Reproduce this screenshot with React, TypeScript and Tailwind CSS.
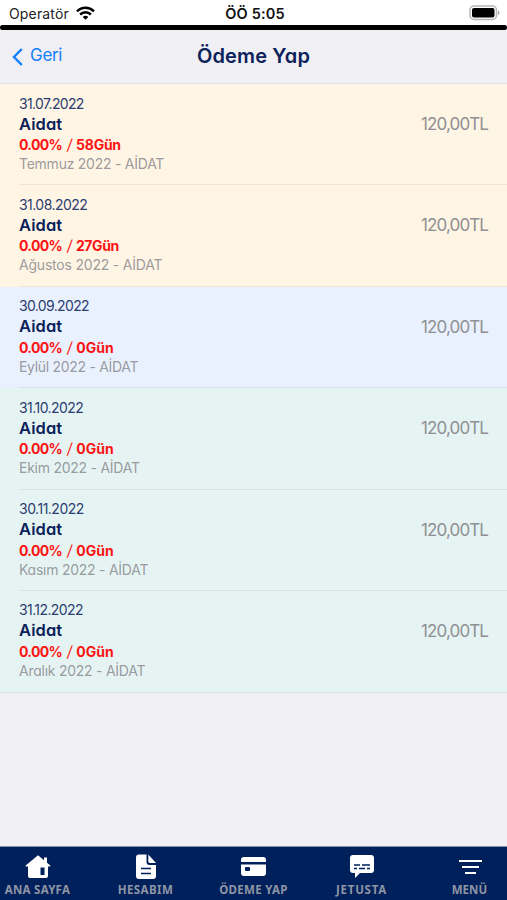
import type { ReactNode } from "react";

type Payment = {
  date: string;
  dateTracking: string;
  days: string;
  daysTracking: string;
  note: string;
  noteTracking: string;
  tone: string;
};

const payments: Payment[] = [
  { date: "31.07.2022", dateTracking: "tracking-[-0.65px]", days: "58", daysTracking: "tracking-[-0.25px]", note: "Temmuz 2022 - AİDAT", noteTracking: "tracking-[-0.25px]", tone: "bg-[#fff5e4]" },
  { date: "31.08.2022", dateTracking: "tracking-[-0.55px]", days: "27", daysTracking: "tracking-[-0.4px]", note: "Ağustos 2022 - AİDAT", noteTracking: "tracking-[-0.2px]", tone: "bg-[#fff5e4]" },
  { date: "30.09.2022", dateTracking: "tracking-[-0.65px]", days: "0", daysTracking: "tracking-[0px]", note: "Eylül 2022 - AİDAT", noteTracking: "tracking-[-0.3px]", tone: "bg-[#e9f1ff]" },
  { date: "31.10.2022", dateTracking: "tracking-[-0.55px]", days: "0", daysTracking: "tracking-[0px]", note: "Ekim 2022 - AİDAT", noteTracking: "tracking-[-0.25px]", tone: "bg-[#e5f4f3]" },
  { date: "30.11.2022", dateTracking: "tracking-[-0.5px]", days: "0", daysTracking: "tracking-[0px]", note: "Kasım 2022 - AİDAT", noteTracking: "tracking-[-0.25px]", tone: "bg-[#e5f4f3]" },
  { date: "31.12.2022", dateTracking: "tracking-[-0.6px]", days: "0", daysTracking: "tracking-[0px]", note: "Aralık 2022 - AİDAT", noteTracking: "tracking-[-0.25px]", tone: "bg-[#e5f4f3]" },
];

function StatusBar() {
  return (
    <div className="grid h-[25px] shrink-0 grid-cols-3 items-center bg-white pt-[3px] pr-[6px] pl-[9px] text-[14px] leading-[20px] text-[#222] [font-feature-settings:normal]">
      <div className="flex items-center gap-[7px]">
        <span className="tracking-[0.15px]">Operatör</span>
        <svg className="-mt-[3px]" width="19" height="14" viewBox="0 0 19 14" fill="none" stroke="#000" strokeWidth="2.5">
          <path d="M1 5.3C5.8.6 13.2.6 18 5.3" />
          <path d="M4.1 8.5c3.1-2.9 7.7-2.9 10.8 0" />
          <path d="M6.7 10.9 9.5 13.7l2.8-2.8c-1.6-1.4-4-1.4-5.6 0Z" fill="#000" stroke="none" />
        </svg>
      </div>
      <span className="text-center text-[14.5px] font-semibold tracking-[0.15px] whitespace-nowrap text-[#111]">ÖÖ 5:05</span>
      <svg className="-mt-[2px] justify-self-end" width="32" height="16" viewBox="0 0 32 16">
        <rect x="1" y="1" width="26.5" height="13.5" rx="4" fill="#fff" stroke="#b5b5b5" strokeWidth="1.5" />
        <rect x="3" y="3" width="22.5" height="9.5" rx="2" fill="#000" />
        <path d="M29 5.3c2 .7 2 4.2 0 4.9Z" fill="#aaa" />
      </svg>
    </div>
  );
}

function PaymentRow({ item, last }: { item: Payment; last: boolean }) {
  return (
    <li className={`${item.tone} h-[101.4px] pl-[19px]`}>
      <div className={`flex h-full justify-between border-b pr-[19px] ${last ? "border-transparent" : "border-[#102050]/7"}`}>
        <div className="flex flex-col pt-[9.5px] whitespace-nowrap">
          <span className={`text-[14px] leading-[20px] text-[#2b3d70] ${item.dateTracking}`}>{item.date}</span>
          <span className="text-[16.5px] leading-[20.5px] font-semibold tracking-[0.1px] text-[#0b2159]">Aidat</span>
          <span className={`pt-px text-[14px] leading-[20px] font-bold text-[#fb1414] ${item.daysTracking}`}>
            <span className="tracking-[-0.7px]">0.00%</span>
            <span className="mr-[4px] ml-[5px] inline-block skew-x-[-6deg] text-[15px] leading-none font-normal">/</span>
            {item.days}Gün
          </span>
          <span className={`text-[14px] leading-[17px] text-[#8f8f93]/90 ${item.noteTracking}`}>{item.note}</span>
        </div>
        <span className="pt-[28px] text-[17px] leading-[24px] tracking-[-0.9px] text-[#8f8f93]">120,00TL</span>
      </div>
    </li>
  );
}

function NavItem({ label, tracking, children }: { label: string; tracking: string; children: ReactNode }) {
  return (
    <button className="flex w-[108px] shrink-0 flex-col items-center pt-[6px]">
      <svg width="28" height="28" viewBox="0 0 28 28" fill="#fff">{children}</svg>
      <span className={`mt-px text-[11.5px] leading-[16px] font-bold whitespace-nowrap text-[#8e95a5] ${tracking}`}>{label}</span>
    </button>
  );
}

export default function App() {
  return (
    <div className="flex h-[900px] w-[507px] flex-col overflow-hidden bg-[#efeff4] font-['Inter',sans-serif] [font-feature-settings:'cv11']">
      <StatusBar />
      <div className="h-[5px] shrink-0 rounded-full bg-black" />
      <header className="grid h-[54px] shrink-0 grid-cols-3 items-center border-b border-[#e2e2e8] px-[12px]">
        <button className="flex items-center gap-[7px] text-[17px] text-[#1680fa]">
          <svg width="11" height="18" viewBox="0 0 11 18" fill="none" stroke="currentColor" strokeWidth="2.5">
            <path d="M9.8 1 2 9l7.8 8" />
          </svg>
          <span className="-mt-px tracking-[-0.3px]">Geri</span>
        </button>
        <h1 className="-mt-px text-center text-[20px] font-semibold tracking-[0.15px] whitespace-nowrap text-[#0b2159]">Ödeme Yap</h1>
      </header>
      <ul className="shrink-0 border-b border-[#dce5e6]">
        {payments.map((item, i) => (
          <PaymentRow key={item.date} item={item} last={i === payments.length - 1} />
        ))}
      </ul>
      <nav className="mt-auto flex h-[54px] shrink-0 justify-center border-t border-[#8790ad] bg-[#00205b] font-['Noto_Sans',sans-serif]">
        <NavItem label="ANA SAYFA" tracking="tracking-[0.25px]">
          <path d="M14 2.2 26.3 12.5q.5.7-.5 1H24V23q0 2-2 2H6q-2 0-2-2v-9.5H2.2q-1-.3-.5-1ZM20 4.500h3v7L20 8Z" />
          <path d="M16.5 14.5h4V22h-4Z" fill="#00205b" />
        </NavItem>
        <NavItem label="HESABIM" tracking="tracking-[0.45px]">
          <path d="M7 1.5h7.5V9q0 3 3 3H24v11q0 3-3 3H7q-3 0-3-3V4.5q0-3 3-3Z" />
          <path d="M16.3 1.5 24 10h-6q-1.7 0-1.7-1.7Z" />
          <path d="M9 15.5h10M9 20.5h10" stroke="#00205b" strokeWidth="1.5" />
        </NavItem>
        <NavItem label="ÖDEME YAP" tracking="tracking-[0.3px]">
          <path d="M4 4h19q3 0 3 3v2H1V7q0-3 3-3ZM1 11.5h25V20q0 3-3 3H4q-3 0-3-3Z" />
          <rect x="5" y="14" width="5" height="4" rx="1" fill="#00205b" />
        </NavItem>
        <NavItem label="JETUSTA" tracking="tracking-[0.75px]">
          <path d="M5 2h18q3 0 3 3v12q0 3-3 3H12l-5 5v-5H5q-3 0-3-3V5q0-3 3-3Z" />
          <path d="M6 12h6m2 0h8M6 15.5h3m2 0h6m2 0h3" stroke="#00205b" strokeWidth="1.3" />
        </NavItem>
        <NavItem label="MENÜ" tracking="tracking-[0.1px]">
          <path d="M3 8h23M6 14h17M9 20h11" stroke="#fff" strokeWidth="2" />
        </NavItem>
      </nav>
    </div>
  );
}
